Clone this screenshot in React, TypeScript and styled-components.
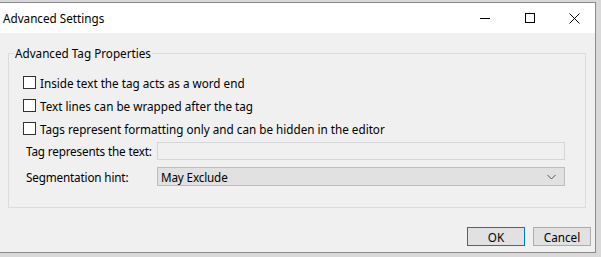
import React from "react";
import styled, { createGlobalStyle } from "styled-components";

const Global = createGlobalStyle`
  html, body {
    margin: 0;
    padding: 0;
    width: 601px;
    height: 257px;
    overflow: hidden;
    background: #d9d9d9;
    font-family: "Noto Sans", "Liberation Sans", sans-serif;
    font-size: 11.7px;
    color: #000;
  }
`;

const Window = styled.div`
  margin-top: 2px;
  width: 596px;
  height: 251px;
  box-sizing: border-box;
  border: 1px solid #8a8a8a;
  border-left: none;
  background: #f0f0f0;
  display: flex;
  flex-direction: column;
`;

const TitleBar = styled.div`
  height: 30px;
  background: #fff;
  display: flex;
  align-items: center;
  padding-left: 3px;
`;

const Title = styled.div`
  flex: 1;
  padding-bottom: 1px;
`;

const Captions = styled.div`
  display: flex;
  margin-right: -2px;
`;

const CaptionButton = styled.div`
  width: 45px;
  height: 30px;
  display: flex;
  align-items: center;
  justify-content: center;
`;

const Body = styled.div`
  flex: 1;
  display: flex;
  flex-direction: column;
  padding: 12px 9px 0 8px;
`;

const Group = styled.fieldset`
  margin: 0;
  padding: 0;
  height: 163px;
  box-sizing: border-box;
  border: 1px solid #dcdcdc;
  border-radius: 0;
  legend {
    padding: 0 1px;
    margin-left: 5px;
  }
`;

const GroupContent = styled.div`
  display: flex;
  flex-direction: column;
  padding: 10px 0 0 14px;
`;

const CheckRow = styled.label`
  display: flex;
  align-items: center;
  height: 23px;
  gap: 4px;
  white-space: nowrap;
`;

const Box = styled.span`
  width: 11px;
  height: 11px;
  border: 1px solid #333;
  background: #fff;
  flex: none;
`;

const FieldRow = styled.div<{ $top: number }>`
  display: flex;
  align-items: center;
  margin-top: ${(p) => p.$top}px;
  padding-left: 3px;
  letter-spacing: -0.15px;
`;

const FieldLabel = styled.span`
  width: 131px;
  flex: none;
  white-space: nowrap;
`;

const TextBox = styled.div`
  width: 408px;
  height: 18px;
  box-sizing: border-box;
  border: 1px solid #d6d6d6;
  background: #f0f0f0;
`;

const Combo = styled.div`
  width: 408px;
  height: 19px;
  box-sizing: border-box;
  border: 1px solid #bdbdbd;
  background: #e1e1e1;
  display: flex;
  align-items: center;
  padding: 0 8px 0 3px;
  span {
    flex: 1;
  }
`;

const Footer = styled.div`
  display: flex;
  justify-content: flex-end;
  gap: 8px;
  padding: 19px 0 0 0;
  margin-right: -5px;
`;

const Button = styled.div<{ $primary?: boolean }>`
  width: 58px;
  height: 19px;
  box-sizing: border-box;
  border: 1px solid ${(p) => (p.$primary ? "#0078d7" : "#adadad")};
  background: #e1e1e1;
  display: flex;
  align-items: center;
  justify-content: center;
`;

const options = [
  "Inside text the tag acts as a word end",
  "Text lines can be wrapped after the tag",
  "Tags represent formatting only and can be hidden in the editor",
];

export default function App() {
  return (
    <>
      <Global />
      <Window>
        <TitleBar>
          <Title>Advanced Settings</Title>
          <Captions>
            <CaptionButton>
              <svg width="10" height="10" viewBox="0 0 10 10">
                <path d="M0 5.5h10" stroke="#000" strokeWidth="1" />
              </svg>
            </CaptionButton>
            <CaptionButton>
              <svg width="10" height="10" viewBox="0 0 10 10">
                <rect x="0.5" y="0.5" width="9" height="9" fill="none" stroke="#000" />
              </svg>
            </CaptionButton>
            <CaptionButton>
              <svg width="11" height="11" viewBox="0 0 11 11">
                <path d="M0.5 0.5l10 10M10.5 0.5l-10 10" stroke="#000" strokeWidth="1" />
              </svg>
            </CaptionButton>
          </Captions>
        </TitleBar>
        <Body>
          <Group>
            <legend>Advanced Tag Properties</legend>
            <GroupContent>
              {options.map((o) => (
                <CheckRow key={o}>
                  <Box />
                  {o}
                </CheckRow>
              ))}
              <FieldRow $top={2}>
                <FieldLabel>Tag represents the text:</FieldLabel>
                <TextBox />
              </FieldRow>
              <FieldRow $top={7}>
                <FieldLabel>Segmentation hint:</FieldLabel>
                <Combo>
                  <span>May Exclude</span>
                  <svg width="9" height="6" viewBox="0 0 9 6">
                    <path d="M0.5 1l4 4 4-4" fill="none" stroke="#555" />
                  </svg>
                </Combo>
              </FieldRow>
            </GroupContent>
          </Group>
          <Footer>
            <Button $primary>OK</Button>
            <Button>Cancel</Button>
          </Footer>
        </Body>
      </Window>
    </>
  );
}
